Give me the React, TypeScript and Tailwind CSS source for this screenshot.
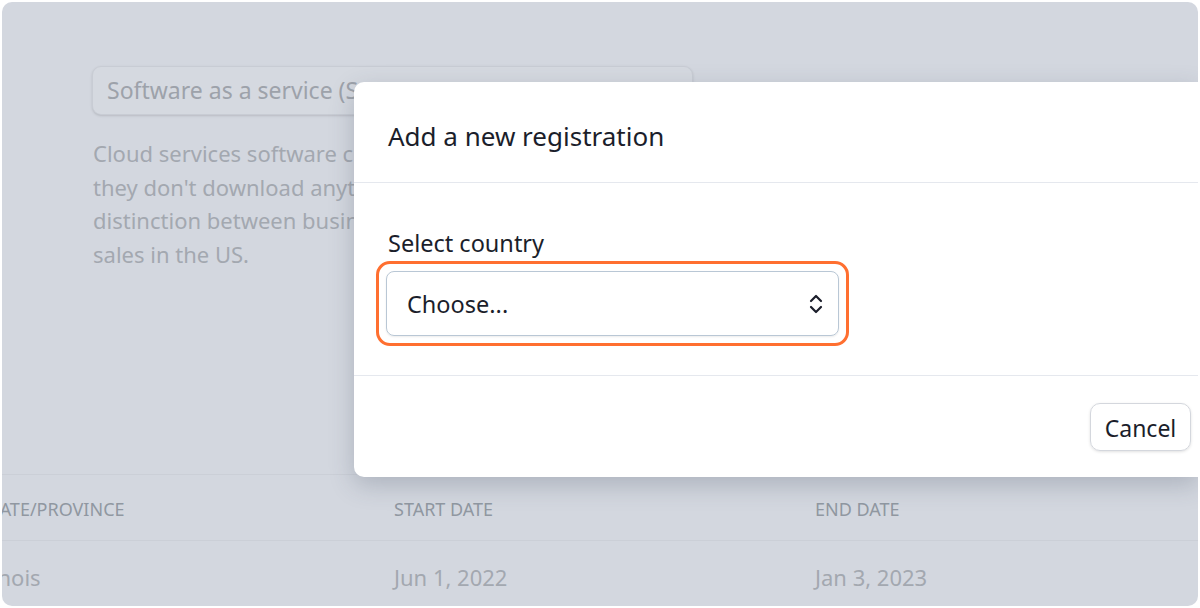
import React from "react";

const font = { fontFamily: '"Noto Sans", "Open Sans", sans-serif' };

function Chevrons({ className = "" }: { className?: string }) {
  return (
    <svg viewBox="0 0 16 24" className={className} fill="none" stroke="currentColor" strokeWidth="2.2" strokeLinecap="round" strokeLinejoin="round">
      <path d="M3 9 L8 4 L13 9" />
      <path d="M3 15 L8 20 L13 15" />
    </svg>
  );
}

export default function App() {
  return (
    <div className="w-[1200px] h-[608px] bg-white p-[2px]" style={font}>
      <div className="relative w-full h-full rounded-[10px] bg-[#d3d7df] overflow-hidden flex flex-col">
        {/* background page */}
        <div className="pl-[90px] pt-[64px]">
          <div className="w-[601px] h-[49px] rounded-[9px] border border-[#c8ccd4] bg-[#d5d9e0] flex items-center justify-between px-[14px] shadow-sm">
            <span className="text-[23px] text-[#9da2aa] leading-none">Software as a service (SaaS)</span>
            <Chevrons className="w-[12px] h-[18px] text-[#9da2aa]" />
          </div>
          <p className="mt-[22px] ml-[1px] text-[22px] leading-[33.5px] text-[#a3a8b0] whitespace-nowrap">
            Cloud services software customers access online, so
            <br />
            they don't download anything. Some states make a
            <br />
            distinction between business and personal use for SaaS
            <br />
            sales in the US.
          </p>
        </div>
        <div className="mt-auto">
          <div className="border-t border-[#cbcfd7] h-[66px] flex items-center text-[18px] text-[#9097a1] uppercase pt-[4px]">
            <div className="w-[392px] overflow-hidden whitespace-nowrap">
              <span className="-ml-[21px] inline-block">State/Province</span>
            </div>
            <div className="w-[421px]">Start date</div>
            <div>End date</div>
          </div>
          <div className="border-t border-[#cbcfd7] h-[66px] flex items-center text-[22px] text-[#a3a8b0] pt-[8px]">
            <div className="w-[392px] overflow-hidden whitespace-nowrap">
              <span className="-ml-[29px] inline-block">Illinois</span>
            </div>
            <div className="w-[421px]">Jun 1, 2022</div>
            <div>Jan 3, 2023</div>
          </div>
        </div>

        {/* modal */}
        <div className="absolute left-[352px] top-[80px] w-[844px] bg-white rounded-l-[10px] shadow-[0_8px_24px_rgba(60,70,90,0.25)]">
          <div className="h-[101px] flex items-center pl-[34px] pt-[8px] border-b border-[#e5e8ee]">
            <h2 className="text-[26px] text-[#1b1e2b] leading-none">Add a new registration</h2>
          </div>
          <div className="h-[193px] border-b border-[#e5e8ee] pl-[22px] pt-[46px]">
            <div className="pl-[12px] text-[23.5px] text-[#1b1e2b] leading-[28px]">Select country</div>
            <div className="mt-[4px] w-[473px] h-[85px] rounded-[14px] border-[3px] border-[#ff6f30] p-[7px]">
              <div className="h-full rounded-[8px] border border-[#b9c7d5] shadow-[0_1px_2px_rgba(0,0,0,0.08)] flex items-center justify-between pl-[20px] pr-[14px]">
                <span className="text-[23.5px] text-[#1b1e2b] leading-none pt-[3px]">Choose...</span>
                <Chevrons className="w-[16px] h-[24px] text-[#1b1e2b]" />
              </div>
            </div>
          </div>
          <div className="h-[101px] flex items-center justify-end pr-[7px]">
            <button className="w-[101px] h-[48px] rounded-[10px] border border-[#d4d7dd] shadow-[0_1px_3px_rgba(0,0,0,0.12)] text-[23px] text-[#1b1e2b] leading-none pt-[3px]">
              Cancel
            </button>
          </div>
        </div>
      </div>
    </div>
  );
}
